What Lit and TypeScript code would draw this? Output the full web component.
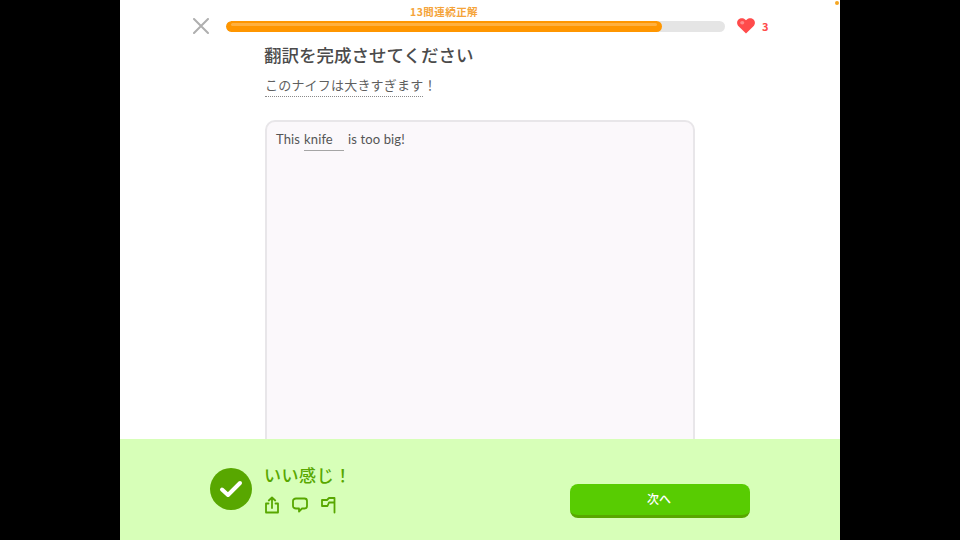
import { LitElement, html, css } from 'lit';
import { customElement } from 'lit/decorators.js';

@customElement('app-root')
export class AppRoot extends LitElement {
  static styles = css`
    :host {
      display: block;
      width: 960px;
      height: 540px;
      background: #000;
      font-family: "Noto Sans CJK JP", "Noto Sans", sans-serif;
    }
    .stage {
      position: relative;
      width: 720px;
      height: 540px;
      margin: 0 auto;
      background: #fff;
      display: flex;
      flex-direction: column;
      overflow: hidden;
    }
    .dot {
      position: absolute;
      top: 1px;
      right: 1px;
      width: 4px;
      height: 4px;
      border-radius: 50%;
      background: #f5a623;
    }
    .main {
      flex: 1;
      min-height: 0;
      overflow: hidden;
    }
    .top {
      display: flex;
      align-items: flex-end;
      padding: 5px 0 0 73px;
    }
    .close {
      width: 16px;
      height: 16px;
      margin: 0 17px -2px 0;
      display: block;
    }
    .track-col {
      width: 499px;
    }
    .streak {
      height: 16px;
      padding-left: 184px;
      font-size: 10.5px;
      line-height: 13px;
      font-weight: 700;
      color: #f5a43a;
      letter-spacing: 0.45px;
    }
    .track {
      height: 11px;
      border-radius: 6px;
      background: #e5e5e5;
      overflow: hidden;
    }
    .fill {
      height: 11px;
      border-radius: 6px;
      background: #ff9600;
      display: flex;
      padding: 2px 5px 0;
      box-sizing: border-box;
    }
    .shine {
      flex: 1;
      height: 3px;
      border-radius: 2px;
      background: #ffb03f;
    }
    .heart {
      width: 18px;
      height: 16px;
      margin: 0 0 -2px 12px;
      display: block;
    }
    .lives {
      margin: 0 0 -1px 7px;
      font-size: 11px;
      line-height: 13px;
      font-weight: 700;
      color: #ff4b4b;
    }
    .content {
      padding: 10px 0 0 145px;
    }
    h1 {
      margin: 0 0 0 -1px;
      font-size: 17.5px;
      line-height: 26px;
      font-weight: 500;
      color: #4b4b4b;
    }
    .prompt {
      box-sizing: border-box;
      width: 158px;
      margin-top: 6px;
      white-space: nowrap;
      font-size: 13px;
      line-height: 21px;
      letter-spacing: 0.2px;
      font-weight: 400;
      color: #5f5f5f;
      border-bottom: 1px dotted #8a8a8a;
      padding-bottom: 1px;
    }
    .answer {
      box-sizing: border-box;
      width: 430px;
      height: 340px;
      margin-top: 23px;
      padding: 9px 9px 0;
      border: 2px solid #e8e6e9;
      border-radius: 10px;
      background: #fbf8fb;
      display: flex;
      align-items: flex-start;
      font-family: Lato, "Noto Sans", sans-serif;
      font-size: 13px;
      line-height: 17px;
      letter-spacing: 0.12px;
      color: #555;
    }
    .blank {
      box-sizing: border-box;
      width: 40px;
      height: 20px;
      margin: 0 4px;
      border-bottom: 1px solid #a5a5a5;
    }
    .footer {
      height: 101px;
      background: #d7ffb8;
      display: flex;
      align-items: flex-start;
      padding: 0 90px;
    }
    .badge {
      width: 42px;
      height: 42px;
      margin-top: 29px;
      border-radius: 50%;
      background: #58a700;
      display: flex;
      align-items: center;
      justify-content: center;
    }
    .feedback {
      margin: 24px 0 0 12px;
      flex: 1;
    }
    .good {
      font-size: 17px;
      line-height: 24px;
      font-weight: 500;
      letter-spacing: 0.55px;
      color: #58a700;
    }
    .actions {
      display: flex;
      gap: 12px;
      margin-top: 9px;
    }
    .actions svg {
      width: 16px;
      height: 18px;
      display: block;
    }
    .next {
      box-sizing: border-box;
      width: 180px;
      height: 34px;
      margin-top: 45px;
      padding: 0 2px 3px 0;
      border: 0;
      border-bottom: 3px solid #58a700;
      border-radius: 8px;
      background: #58cc02;
      color: #fff;
      font-family: inherit;
      font-size: 12px;
      font-weight: 500;
    }
  `;

  render() {
    return html`
      <div class="stage">
        <div class="dot"></div>
        <div class="main">
          <div class="top">
            <svg class="close" viewBox="0 0 16 16" fill="none" stroke="#afafaf" stroke-width="2" stroke-linecap="round">
              <path d="M1 1 15 15M15 1 1 15" />
            </svg>
            <div class="track-col">
              <div class="streak">13問連続正解</div>
              <div class="track">
                <div class="fill" style="width: ${(436 / 499) * 100}%"><div class="shine"></div></div>
              </div>
            </div>
            <svg class="heart" viewBox="0 0 19 17">
              <path fill="#ff4b4b" d="M9.500 16.500 1.600 8.800C-.5 6.600-.4 3.400 1.500 1.600 3.600-.4 7.400-.3 9.500 2.400 11.600-.3 15.400-.4 17.500 1.600c1.900 1.800 2 5-.1 7.200z" />
              <ellipse cx="5.500" cy="5" rx="2.200" ry="1.800" fill="#ff8a8a" />
            </svg>
            <div class="lives">3</div>
          </div>
          <div class="content">
            <h1>翻訳を完成させてください</h1>
            <div class="prompt">このナイフは大きすぎます！</div>
            <div class="answer">
              <span>This</span>
              <span class="blank">knife</span>
              <span>is too big!</span>
            </div>
          </div>
        </div>
        <div class="footer">
          <div class="badge">
            <svg width="24" height="18" viewBox="0 0 24 18" fill="none" stroke="#fff" stroke-width="4" stroke-linecap="round" stroke-linejoin="round">
              <path d="M3 9.500 9 15 21 3" />
            </svg>
          </div>
          <div class="feedback">
            <div class="good">いい感じ！</div>
            <div class="actions">
              <svg viewBox="0 0 16 18" fill="none" stroke="#58a700" stroke-width="1.800" stroke-linecap="round" stroke-linejoin="round">
                <path d="M4.500 7.500H2v9h12v-9h-2.500M8 12V1.500M4.800 4.500 8 1.500l3.200 3" />
              </svg>
              <svg viewBox="0 0 16 18" fill="none" stroke="#58a700" stroke-width="1.800" stroke-linecap="round" stroke-linejoin="round">
                <path d="M4 2.500h8.500C14 2.500 15 3.500 15 5v5c0 1.500-1 2.500-2.500 2.500H10l-3 3v-3H4c-1.800 0-3-1-3-2.500V5c0-1.500 1.200-2.500 3-2.500z" />
              </svg>
              <svg viewBox="0 0 16 18" fill="none" stroke="#58a700" stroke-width="1.800" stroke-linecap="round" stroke-linejoin="round">
                <path d="M14.500 16.500V2H9L7 4H2v6h5.500L9 6.500h5.500" />
              </svg>
            </div>
          </div>
          <button class="next">次へ</button>
        </div>
      </div>
    `;
  }
}
